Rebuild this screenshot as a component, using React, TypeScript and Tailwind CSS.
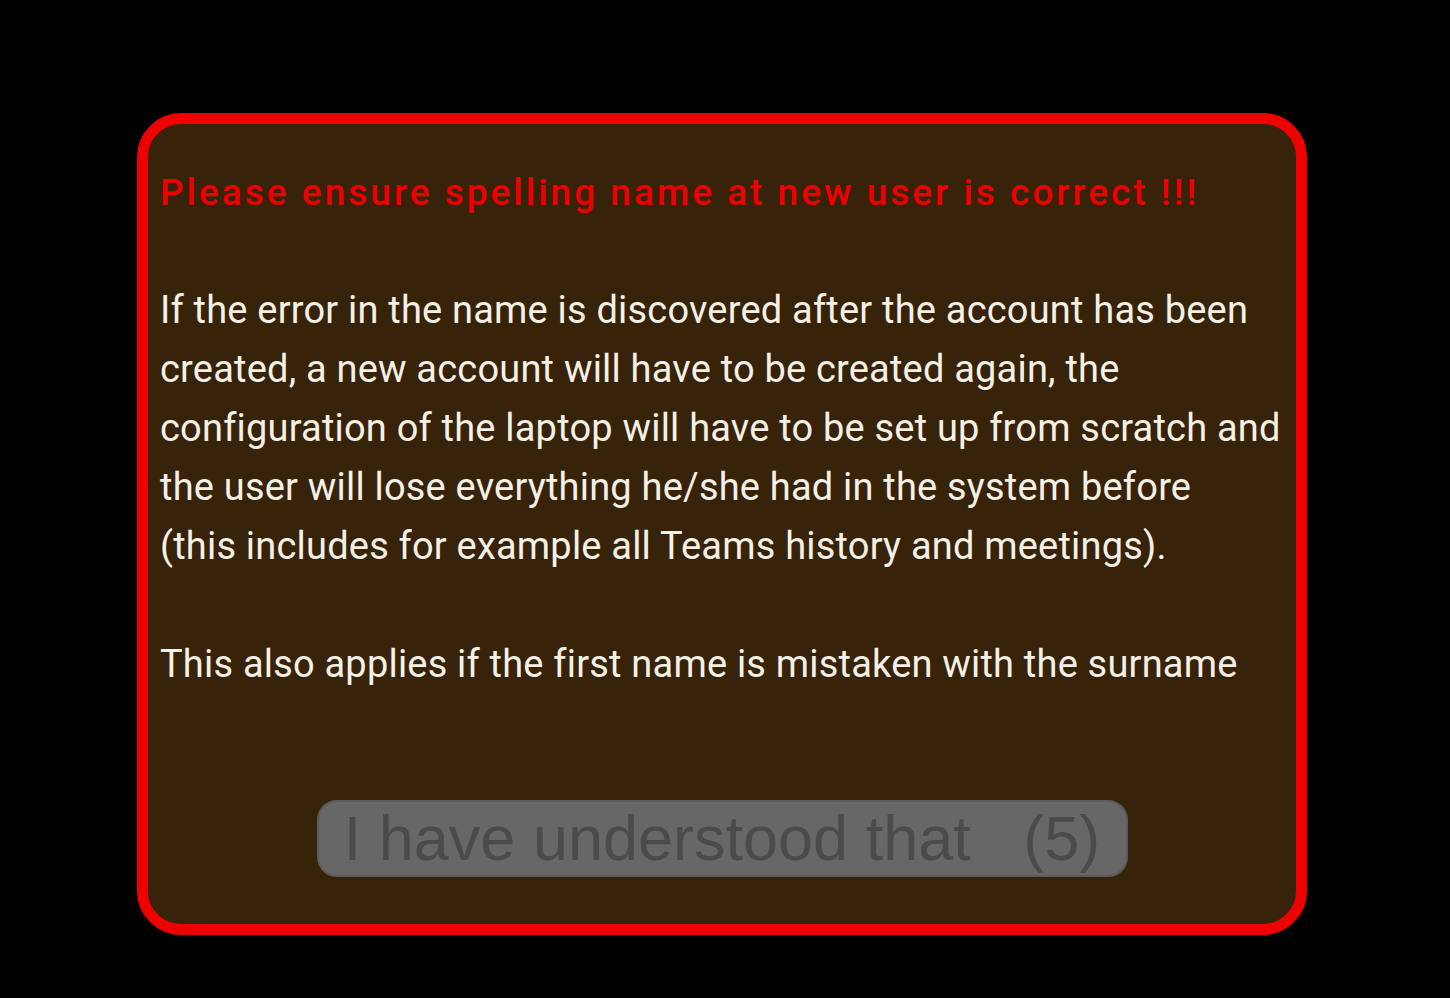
export default function App() {
  return (
    <div className="min-h-[998px] w-full bg-black pt-[113px]">
      <div className="ml-[137px] w-[1170px] h-[822px] rounded-[44px] border-[11px] border-[#ee0000] bg-[#372309] px-[12px] pt-[39px] flex flex-col">
        <h1 className="font-['Roboto',sans-serif] text-[37px] leading-[59px] tracking-[3px] font-medium text-[#ee0000]">
          Please ensure spelling name at new user is correct !!!
        </h1>
        <div className="mt-[59px] font-['Roboto',sans-serif] text-[38px] leading-[59px] tracking-[0.2px] text-[#f5f0e6]">
          <p>
            If the error in the name is discovered after the account has been created, a new account will have to be
            created again, the configuration of the laptop will have to be set up from scratch and the user will lose
            everything he/she had in the system before
            <br />
            (this includes for example all Teams history and meetings).
          </p>
          <p className="mt-[59px]">This also applies if the first name is mistaken with the surname</p>
        </div>
        <div className="mt-auto mb-[47px] flex justify-center">
          <button className="w-[811px] h-[77px] rounded-[20px] border-2 border-[#5b5b5b] bg-[#676767] font-['Liberation_Sans',sans-serif] text-[63px] leading-none text-[#4b4b4b]">
            I have understood that&nbsp;&nbsp; (5)
          </button>
        </div>
      </div>
    </div>
  );
}
